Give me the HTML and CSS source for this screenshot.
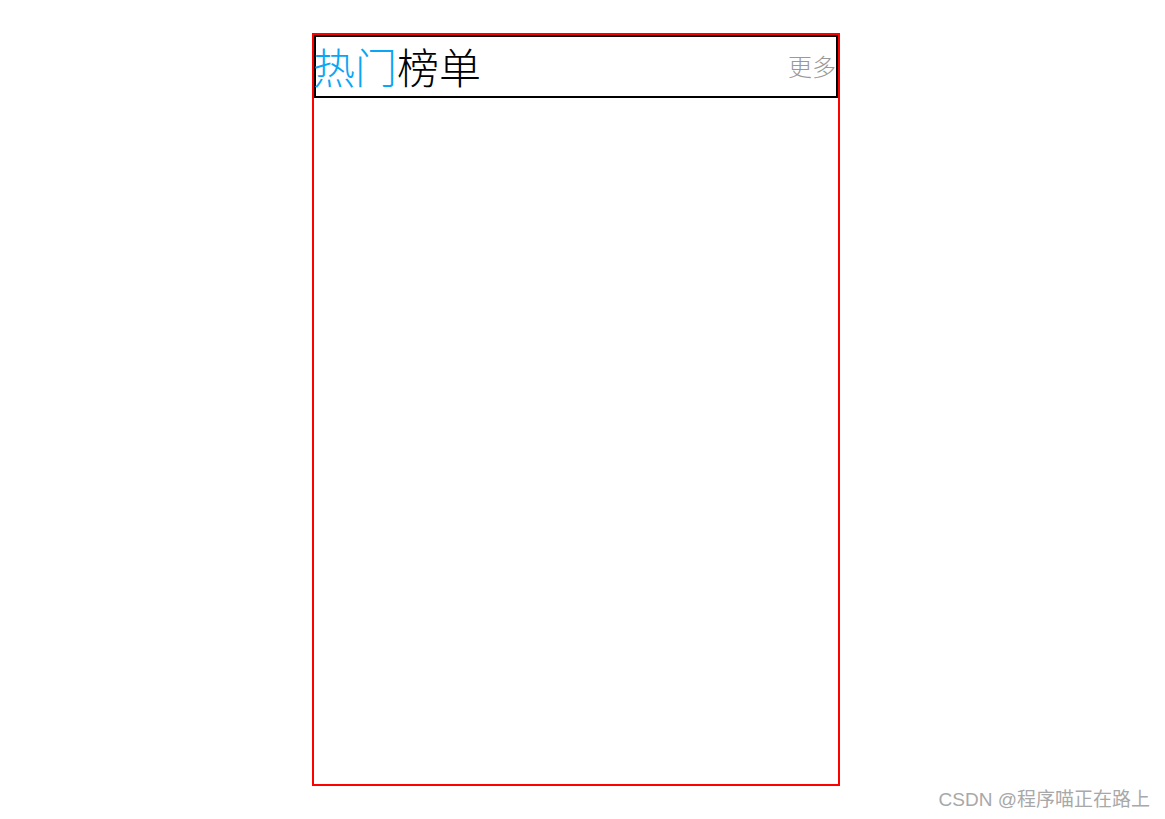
FILE: index.html
```html
<!DOCTYPE html>
<html lang="zh">
<head>
<meta charset="utf-8">
<title>热门榜单</title>
<link rel="stylesheet" href="styles.css">
</head>
<body>
<div class="page">
  <div class="box">
    <div class="header">
      <div class="title"><span class="hot">热门</span>榜单</div>
      <div class="more">更多</div>
    </div>
  </div>
</div>
<div class="watermark">CSDN @程序喵正在路上</div>
</body>
</html>
```
FILE: styles.css
```css
html, body {
  margin: 0;
  padding: 0;
  background: #fff;
}
body {
  width: 1165px;
  height: 819px;
  position: relative;
  overflow: hidden;
  font-family: "Noto Sans CJK SC", "Noto Sans", sans-serif;
}
.page {
  padding-top: 33px;
  padding-left: 312px;
}
.box {
  width: 524px;
  height: 749px;
  border: 2px solid #ff0000;
}
.header {
  height: 57px;
  padding-bottom: 2px;
  border: 2px solid #000;
  display: flex;
  align-items: center;
  justify-content: space-between;
}
.title {
  font-size: 42px;
  font-weight: 300;
  line-height: 1;
  color: #000;
  margin-left: -3px;
}
.hot {
  color: #0aa6f5;
}
.more {
  font-size: 24px;
  font-weight: 300;
  line-height: 1;
  color: #999;
}
.watermark {
  position: absolute;
  right: 15px;
  bottom: 8px;
  font-family: "Liberation Sans", "Noto Sans CJK SC", sans-serif;
  font-size: 19px;
  color: #a8a8a8;
}
```
